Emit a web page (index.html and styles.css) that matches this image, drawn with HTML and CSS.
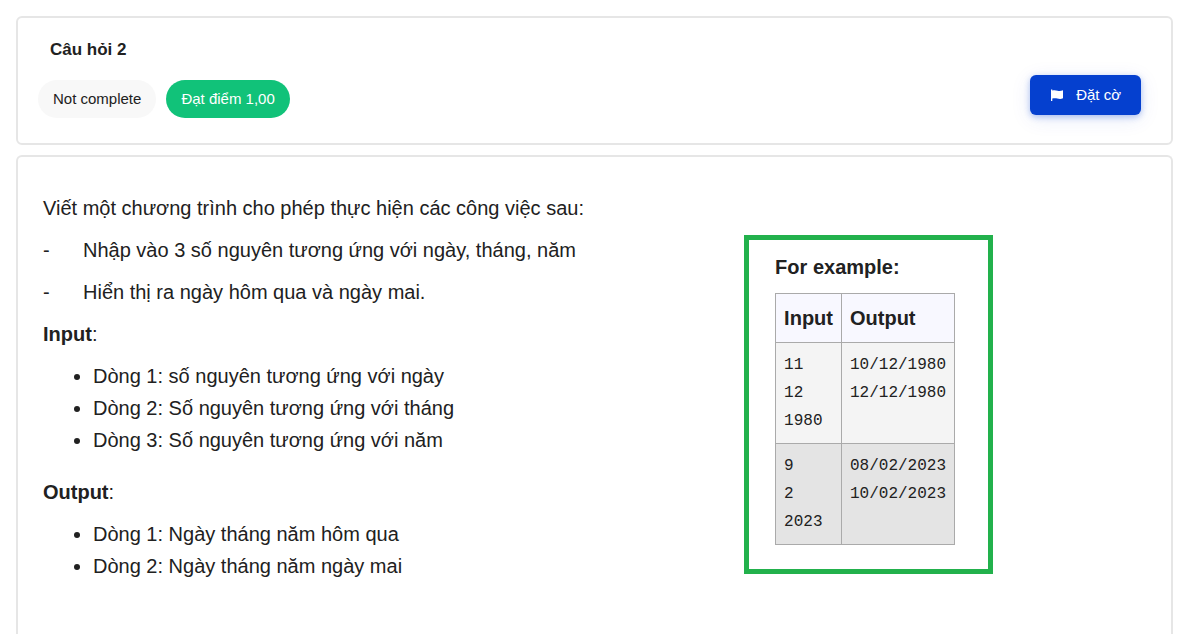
FILE: index.html
```html
<!DOCTYPE html>
<html lang="vi">
<head>
<meta charset="utf-8">
<meta name="viewport" content="width=device-width, initial-scale=1">
<title>Câu hỏi 2</title>
<link rel="stylesheet" href="styles.css">
</head>
<body>
<main class="page">
  <header class="card info">
    <div>
      <h1 class="info-title">Câu hỏi 2</h1>
      <div class="badges">
        <span class="badge">Not complete</span>
        <span class="badge badge-grade">Đạt điểm 1,00</span>
      </div>
    </div>
    <button class="flag-button" type="button">
      <svg class="flag-icon" viewBox="0 0 14 12" aria-hidden="true"><path d="M1 0.500h1.300v1C4 1 5.600 1 7.500 1.700 9.500 2.300 11 2 13 1.300V9.300C11 10.200 9.300 10.100 7.300 9.500 5.500 9 3.800 9.100 2.300 9.600V12H1z"/></svg>
      <span>Đặt cờ</span>
    </button>
  </header>

  <section class="card question">
    <div class="statement">
      <p>Viết một chương trình cho phép thực hiện các công việc sau:</p>
      <p class="dash"><span>-</span><span>Nhập vào 3 số nguyên tương ứng với ngày, tháng, năm</span></p>
      <p class="dash"><span>-</span><span>Hiển thị ra ngày hôm qua và ngày mai.</span></p>
      <p><strong>Input</strong>:</p>
      <ul>
        <li>Dòng 1: số nguyên tương ứng với ngày</li>
        <li>Dòng 2: Số nguyên tương ứng với tháng</li>
        <li>Dòng 3: Số nguyên tương ứng với năm</li>
      </ul>
      <p><strong>Output</strong>:</p>
      <ul>
        <li>Dòng 1: Ngày tháng năm hôm qua</li>
        <li>Dòng 2: Ngày tháng năm ngày mai</li>
      </ul>
    </div>
    <aside class="example">
      <h2 class="example-title" id="example-title">For example:</h2>
      <table class="cases" aria-labelledby="example-title">
        <thead>
          <tr><th scope="col">Input</th><th scope="col">Output</th></tr>
        </thead>
        <tbody>
          <tr>
            <td><pre>11
12
1980</pre></td>
            <td><pre>10/12/1980
12/12/1980</pre></td>
          </tr>
          <tr>
            <td><pre>9
2
2023</pre></td>
            <td><pre>08/02/2023
10/02/2023</pre></td>
          </tr>
        </tbody>
      </table>
    </aside>
  </section>
</main>
</body>
</html>
```

FILE: styles.css
```css
* {
  box-sizing: border-box;
}

body {
  margin: 0;
  background: #fff;
  color: #212121;
  font-family: "Liberation Sans", Arial, sans-serif;
  font-size: 20px;
  line-height: 32px;
}

h1, h2, p, ul, pre {
  margin: 0;
}

.page {
  display: flex;
  flex-direction: column;
  gap: 10px;
  min-height: 100vh;
  padding: 16px 15px 0 16px;
}

.card {
  border: 2px solid #e6e6e6;
  border-radius: 6px;
}

.info {
  display: flex;
  justify-content: space-between;
  align-items: flex-end;
  padding: 16px 30px 25px 20px;
}

.info-title {
  padding-left: 12px;
  font-size: 17px;
  line-height: 32px;
}

.badges {
  display: flex;
  gap: 10px;
  margin-top: 14px;
}

.badge {
  padding: 7px 15px;
  border-radius: 20px;
  background: #f8f8f8;
  font-size: 15px;
  line-height: 24px;
}

.badge-grade {
  background: #11c279;
  color: #fff;
}

.flag-button {
  display: flex;
  align-items: center;
  gap: 12px;
  height: 40px;
  margin-bottom: 3px;
  padding: 0 20px;
  border: 0;
  border-radius: 6px;
  background: #0540cf;
  box-shadow: 0 2px 6px rgba(5, 64, 207, 0.3), 0 4px 20px rgba(5, 64, 207, 0.1);
  color: #fff;
  font: 15px/24px "Liberation Sans", Arial, sans-serif;
}

.flag-icon {
  width: 14px;
  height: 12px;
  fill: currentColor;
}

.question {
  display: flex;
  flex: 1;
  justify-content: space-between;
  align-items: flex-start;
  padding: 35px 178px 0 25px;
  border-bottom: 0;
  border-radius: 6px 6px 0 0;
}

.statement p {
  margin-bottom: 10px;
}

.statement ul {
  margin-bottom: 20px;
  padding-left: 50px;
}

.dash {
  display: grid;
  grid-template-columns: 40px auto;
}

.example {
  margin-top: 43px;
  padding: 11px 33px 24px 26px;
  border: 5px solid #22b14c;
}

.example-title {
  margin-bottom: 10px;
  font-size: 20px;
  line-height: 32px;
}

.cases {
  border-collapse: collapse;
}

.cases th,
.cases td {
  padding: 8px;
  border: 1px solid #aaa;
  text-align: left;
  vertical-align: top;
}

.cases th {
  background: #f8f8ff;
}

.cases td {
  background: #f4f4f4;
}

.cases tbody tr:nth-child(even) td {
  background: #e4e4e4;
}

.cases pre {
  font: 16px/28px "Liberation Mono", monospace;
}
```
